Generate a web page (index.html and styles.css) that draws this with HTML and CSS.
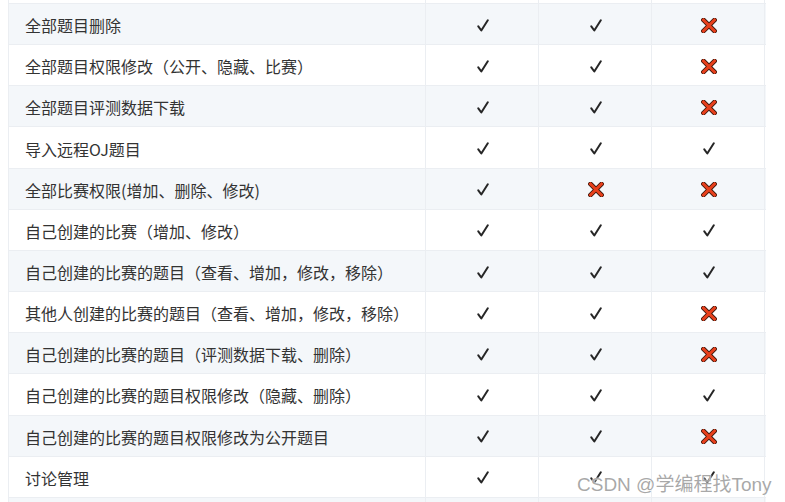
FILE: index.html
```html
<!DOCTYPE html>
<html lang="zh">
<head>
<meta charset="utf-8">
<link rel="stylesheet" href="styles.css">
</head>
<body>
<svg width="0" height="0" class="defs">
  <defs>
    <symbol id="ok" viewBox="0 0 12 13">
      <path d="M1.3 7.3 L4.3 11.5 L10.8 1.3" fill="none" stroke="#262626" stroke-width="2" stroke-linecap="round" stroke-linejoin="round"/>
    </symbol>
    <symbol id="no" viewBox="0 0 16 15">
      <path d="M2.5 2 L13.5 13 M13.5 2 L2.5 13" fill="none" stroke="#3a1a10" stroke-width="4.6" stroke-linecap="square"/>
      <path d="M2.5 2 L13.5 13 M13.5 2 L2.5 13" fill="none" stroke="#e8401c" stroke-width="3" stroke-linecap="square"/>
    </symbol>
  </defs>
</svg>
<div class="page">
  <div class="table">
    <div class="row"><div class="cell name"></div><div class="cell"></div><div class="cell"></div><div class="cell"></div></div>
    <div class="row stripe"><div class="cell name">全部题目删除</div><div class="cell"><svg class="ok"><use href="#ok"/></svg></div><div class="cell"><svg class="ok"><use href="#ok"/></svg></div><div class="cell"><svg class="no"><use href="#no"/></svg></div></div>
    <div class="row"><div class="cell name">全部题目权限修改（公开、隐藏、比赛）</div><div class="cell"><svg class="ok"><use href="#ok"/></svg></div><div class="cell"><svg class="ok"><use href="#ok"/></svg></div><div class="cell"><svg class="no"><use href="#no"/></svg></div></div>
    <div class="row stripe"><div class="cell name">全部题目评测数据下载</div><div class="cell"><svg class="ok"><use href="#ok"/></svg></div><div class="cell"><svg class="ok"><use href="#ok"/></svg></div><div class="cell"><svg class="no"><use href="#no"/></svg></div></div>
    <div class="row"><div class="cell name">导入远程OJ题目</div><div class="cell"><svg class="ok"><use href="#ok"/></svg></div><div class="cell"><svg class="ok"><use href="#ok"/></svg></div><div class="cell"><svg class="ok"><use href="#ok"/></svg></div></div>
    <div class="row stripe"><div class="cell name">全部比赛权限(增加、删除、修改)</div><div class="cell"><svg class="ok"><use href="#ok"/></svg></div><div class="cell"><svg class="no"><use href="#no"/></svg></div><div class="cell"><svg class="no"><use href="#no"/></svg></div></div>
    <div class="row"><div class="cell name">自己创建的比赛（增加、修改）</div><div class="cell"><svg class="ok"><use href="#ok"/></svg></div><div class="cell"><svg class="ok"><use href="#ok"/></svg></div><div class="cell"><svg class="ok"><use href="#ok"/></svg></div></div>
    <div class="row stripe"><div class="cell name">自己创建的比赛的题目（查看、增加，修改，移除）</div><div class="cell"><svg class="ok"><use href="#ok"/></svg></div><div class="cell"><svg class="ok"><use href="#ok"/></svg></div><div class="cell"><svg class="ok"><use href="#ok"/></svg></div></div>
    <div class="row"><div class="cell name">其他人创建的比赛的题目（查看、增加，修改，移除）</div><div class="cell"><svg class="ok"><use href="#ok"/></svg></div><div class="cell"><svg class="ok"><use href="#ok"/></svg></div><div class="cell"><svg class="no"><use href="#no"/></svg></div></div>
    <div class="row stripe"><div class="cell name">自己创建的比赛的题目（评测数据下载、删除）</div><div class="cell"><svg class="ok"><use href="#ok"/></svg></div><div class="cell"><svg class="ok"><use href="#ok"/></svg></div><div class="cell"><svg class="no"><use href="#no"/></svg></div></div>
    <div class="row"><div class="cell name">自己创建的比赛的题目权限修改（隐藏、删除）</div><div class="cell"><svg class="ok"><use href="#ok"/></svg></div><div class="cell"><svg class="ok"><use href="#ok"/></svg></div><div class="cell"><svg class="ok"><use href="#ok"/></svg></div></div>
    <div class="row stripe"><div class="cell name">自己创建的比赛的题目权限修改为公开题目</div><div class="cell"><svg class="ok"><use href="#ok"/></svg></div><div class="cell"><svg class="ok"><use href="#ok"/></svg></div><div class="cell"><svg class="no"><use href="#no"/></svg></div></div>
    <div class="row"><div class="cell name">讨论管理</div><div class="cell"><svg class="ok"><use href="#ok"/></svg></div><div class="cell"><svg class="ok"><use href="#ok"/></svg></div><div class="cell"><svg class="ok"><use href="#ok"/></svg></div></div>
    <div class="row stripe"><div class="cell name"></div><div class="cell"></div><div class="cell"></div><div class="cell"></div></div>
  </div>
  <div class="watermark">CSDN @学编程找Tony</div>
</div>
</body>
</html>
```

FILE: styles.css
```css
html, body {
  margin: 0;
  padding: 0;
  background: #ffffff;
  overflow: hidden;
}
.defs {
  position: absolute;
  width: 0;
  height: 0;
}
.page {
  position: relative;
  width: 785px;
  height: 502px;
  overflow: hidden;
  padding-left: 8px;
  box-sizing: border-box;
}
.table {
  width: 757px;
  margin-top: -37.17px;
  border-left: 1px solid #ebeef2;
  font-family: "Noto Sans CJK SC", "Noto Sans", sans-serif;
  font-size: 16px;
  color: #333333;
}
.row {
  display: flex;
  height: 41.17px;
  box-sizing: border-box;
  border-bottom: 1px solid #ebeef2;
  background: #ffffff;
}
.row.stripe {
  background: #f4f7fa;
}
.cell {
  width: 113px;
  box-sizing: border-box;
  border-right: 1px solid #ebeef2;
  display: flex;
  align-items: center;
  justify-content: center;
  padding-top: 2px;
}
.cell.name {
  width: 417px;
  justify-content: flex-start;
  padding-left: 16px;
  white-space: nowrap;
}
.ok {
  width: 12px;
  height: 13px;
  margin-left: 1px;
}
.no {
  width: 16px;
  height: 15px;
  margin-left: 1px;
}
.watermark {
  position: absolute;
  left: 577px;
  top: 469px;
  font-family: "Liberation Sans", "Noto Sans CJK SC", sans-serif;
  font-size: 19px;
  color: rgba(140, 140, 140, 0.75);
  text-shadow: 0 0 1px #ffffff, 0 0 2px #ffffff;
  white-space: nowrap;
}
```
